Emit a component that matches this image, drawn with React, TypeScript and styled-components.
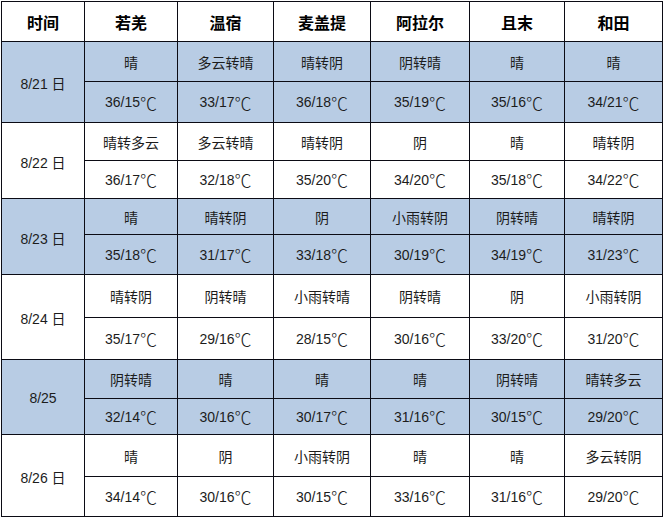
import React from 'react';
import styled, { createGlobalStyle } from 'styled-components';

const GlobalStyle = createGlobalStyle`
  html, body {
    margin: 0;
    padding: 0;
    background: #ffffff;
  }
  body {
    padding: 1px 0 0 1px;
  }
`;

const COLUMN_WIDTHS = [82, 92, 95, 96, 98, 94, 97];
const HEADER_HEIGHT = 39;
// each day has an upper (weather) and lower (temperature) row
const DAY_ROW_HEIGHTS: [number, number][] = [
  [39, 40],
  [37, 37],
  [35, 39],
  [42, 41],
  [38, 35],
  [41, 39],
];

const CITIES = ['若羌', '温宿', '麦盖提', '阿拉尔', '且末', '和田'];

type Day = {
  date: string;
  weather: string[];
  temps: string[];
};

const DAYS: Day[] = [
  {
    date: '8/21 日',
    weather: ['晴', '多云转晴', '晴转阴', '阴转晴', '晴', '晴'],
    temps: ['36/15', '33/17', '36/18', '35/19', '35/16', '34/21'],
  },
  {
    date: '8/22 日',
    weather: ['晴转多云', '多云转晴', '晴转阴', '阴', '晴', '晴转阴'],
    temps: ['36/17', '32/18', '35/20', '34/20', '35/18', '34/22'],
  },
  {
    date: '8/23 日',
    weather: ['晴', '晴转阴', '阴', '小雨转阴', '阴转晴', '晴转阴'],
    temps: ['35/18', '31/17', '33/18', '30/19', '34/19', '31/23'],
  },
  {
    date: '8/24 日',
    weather: ['晴转阴', '阴转晴', '小雨转晴', '阴转晴', '阴', '小雨转阴'],
    temps: ['35/17', '29/16', '28/15', '30/16', '33/20', '31/20'],
  },
  {
    date: '8/25',
    weather: ['阴转晴', '晴', '晴', '晴', '阴转晴', '晴转多云'],
    temps: ['32/14', '30/16', '30/17', '31/16', '30/15', '29/20'],
  },
  {
    date: '8/26 日',
    weather: ['晴', '阴', '小雨转阴', '晴', '晴', '多云转阴'],
    temps: ['34/14', '30/16', '30/15', '33/16', '31/16', '29/20'],
  },
];

const Table = styled.div`
  display: inline-grid;
  grid-template-columns: ${COLUMN_WIDTHS.map(w => `${w}px`).join(' ')};
  grid-template-rows: ${[HEADER_HEIGHT, ...DAY_ROW_HEIGHTS.flat()].map(h => `${h}px`).join(' ')};
  gap: 1px;
  padding: 1px;
  background: #0b0b14;
`;

const Cell = styled.div<{ $tinted?: boolean }>`
  display: flex;
  align-items: center;
  justify-content: center;
  background: ${({ $tinted }) => ($tinted ? '#b8cce4' : '#ffffff')};
  color: #1c1c1c;
  font-family: 'Liberation Sans', 'Noto Sans CJK SC', sans-serif;
  font-size: 14px;
  white-space: nowrap;
`;

const Celsius = styled.span`
  font-family: 'Noto Sans CJK SC', sans-serif;
  font-size: 17px;
  font-weight: 300;
  line-height: 1;
`;

const HeadCell = styled(Cell)`
  color: #000000;
  font-family: 'Noto Sans CJK SC', sans-serif;
  font-size: 16px;
  font-weight: 700;
`;

const DateCell = styled(Cell)`
  grid-row: span 2;
  padding-top: 2px;
`;

export default function App() {
  return (
    <>
      <GlobalStyle />
      <Table>
        <HeadCell>时间</HeadCell>
        {CITIES.map(city => (
          <HeadCell key={city}>{city}</HeadCell>
        ))}
        {DAYS.map((day, i) => {
          const tinted = i % 2 === 0;
          return (
            <React.Fragment key={day.date}>
              <DateCell $tinted={tinted}>{day.date}</DateCell>
              {day.weather.map((w, j) => (
                <Cell key={`w${j}`} $tinted={tinted}>{w}</Cell>
              ))}
              {day.temps.map((t, j) => (
                <Cell key={`t${j}`} $tinted={tinted}>
                  {t}
                  <Celsius>℃</Celsius>
                </Cell>
              ))}
            </React.Fragment>
          );
        })}
      </Table>
    </>
  );
}
